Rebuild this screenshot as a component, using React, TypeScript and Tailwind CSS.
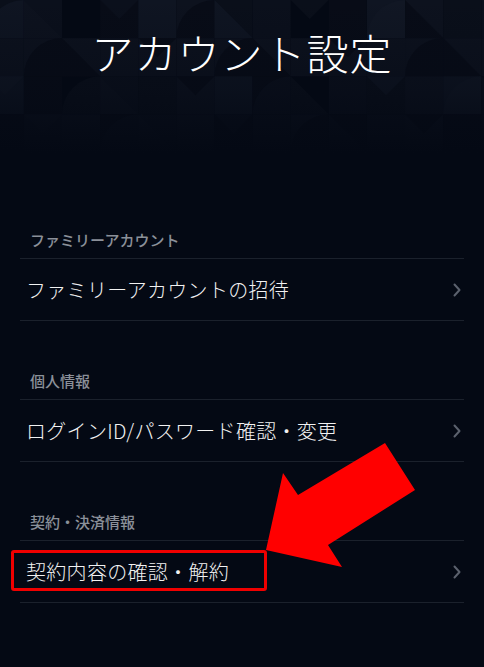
import React from "react";

const sections = [
  { title: "ファミリーアカウント", item: "ファミリーアカウントの招待" },
  { title: "個人情報", item: "ログインID/パスワード確認・変更" },
  { title: "契約・決済情報", item: "契約内容の確認・解約" },
];

const tileFills = ["#0a0f1a", "#0d121e", "#0f1522", "#080c17", "#11172400", "#0b101c"];

function Pattern() {
  const size = 36;
  const cells: React.ReactNode[] = [];
  for (let r = 0; r < 5; r++) {
    for (let c = 0; c < 14; c++) {
      const k = (r * 7 + c * 5 + r * c) % 6;
      const x = c * size;
      const y = r * size;
      const fill = k === 4 ? "#10162300" : tileFills[k];
      cells.push(<rect key={`b${r}-${c}`} x={x} y={y} width={size} height={size} fill={fill} />);
      const shape = (r * 3 + c * 2) % 5;
      const alt = tileFills[(k + 2) % 6].slice(0, 7);
      if (shape === 0) {
        cells.push(
          <path key={`s${r}-${c}`} d={`M${x} ${y + size} A${size} ${size} 0 0 1 ${x + size} ${y} L${x + size} ${y + size} Z`} fill={alt} />
        );
      } else if (shape === 1) {
        cells.push(<path key={`s${r}-${c}`} d={`M${x} ${y} L${x + size} ${y} L${x + size / 2} ${y + size / 2} Z`} fill={alt} />);
      } else if (shape === 2) {
        cells.push(<path key={`s${r}-${c}`} d={`M${x} ${y} L${x + size} ${y + size} L${x} ${y + size} Z`} fill={alt} />);
      }
    }
  }
  return (
    <svg className="absolute inset-0 h-full w-full" viewBox="0 0 484 170" preserveAspectRatio="xMidYMin slice">
      <defs>
        <linearGradient id="fade" x1="0" y1="0" x2="0" y2="1">
          <stop offset="0" stopColor="#040914" stopOpacity="0" />
          <stop offset="0.5" stopColor="#040914" stopOpacity="0.4" />
          <stop offset="0.85" stopColor="#040914" stopOpacity="1" />
        </linearGradient>
      </defs>
      {cells}
      <rect x="0" y="0" width="484" height="170" fill="url(#fade)" />
    </svg>
  );
}

function Chevron() {
  return (
    <svg width="10" height="14" viewBox="0 0 10 14" fill="none">
      <path d="M2.5 1.5 L7.5 7 L2.5 12.5" stroke="#5b616d" strokeWidth="2" strokeLinecap="round" strokeLinejoin="round" />
    </svg>
  );
}

export default function App() {
  return (
    <div
      className="relative min-h-[667px] w-full overflow-hidden bg-[#040914]"
      style={{ fontFamily: '"Noto Sans CJK JP", "Noto Sans", sans-serif' }}
    >
      <header className="relative flex h-[180px] justify-center overflow-hidden">
        <Pattern />
        <h1 className="relative mt-[26px] text-[42px] font-light leading-[52px] tracking-[1px] text-white">
          アカウント設定
        </h1>
      </header>

      <main>
        {sections.map((s) => (
          <section key={s.title} className="px-5">
            <div className="pt-[50px] pb-[8px] pl-[10px] text-[15px] font-medium leading-[20px] text-[#8b9099]">
              {s.title}
            </div>
            <div className="h-px bg-[#1b212c]" />
            <div className="flex h-[61px] items-center justify-between pl-[6px] pr-[2px]">
              <span className="text-[20px] font-light leading-[28px] tracking-[0.3px] text-[#f2f2f2]">{s.item}</span>
              <Chevron />
            </div>
            <div className="h-px bg-[#1b212c]" />
          </section>
        ))}
      </main>

      {/* annotation: red box + arrow */}
      <div className="pointer-events-none absolute left-[11px] top-[550px] h-[41px] w-[256px] rounded-[3px] border-[3px] border-[#f00000]" />
      <svg className="pointer-events-none absolute left-0 top-0" width="484" height="667" viewBox="0 0 484 667">
        <path d="M266 550 L283 473 L298 495 L385 443 L415 490 L328 545 L342 567 Z" fill="#ff0000" />
      </svg>
    </div>
  );
}
